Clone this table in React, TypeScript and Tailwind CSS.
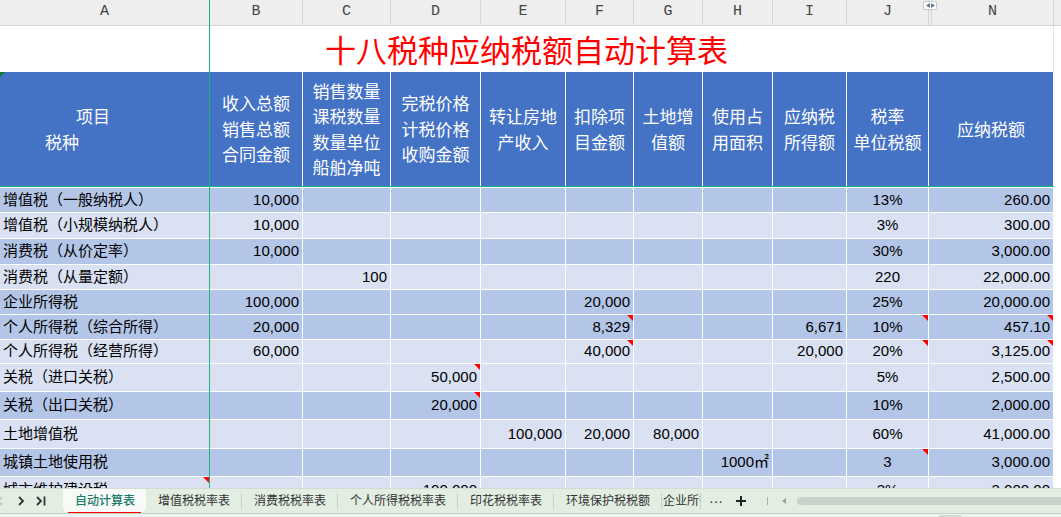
import React from "react";

const GRID =
  "grid grid-cols-[210px_93px_88px_90px_85px_68px_69px_70px_74px_82px_125px_1fr]";

type Row = {
  a: string;
  v: string[];
  h: string;
  dark: boolean;
  notes?: number[];
  aNote?: boolean;
};

// B C D E F G H I J N
const rows: Row[] = [
  { a: "增值税（一般纳税人）", v: ["10,000", "", "", "", "", "", "", "", "13%", "260.00"], h: "h-[25px]", dark: true },
  { a: "增值税（小规模纳税人）", v: ["10,000", "", "", "", "", "", "", "", "3%", "300.00"], h: "h-[26px]", dark: false },
  { a: "消费税（从价定率）", v: ["10,000", "", "", "", "", "", "", "", "30%", "3,000.00"], h: "h-[26px]", dark: true },
  { a: "消费税（从量定额）", v: ["", "100", "", "", "", "", "", "", "220", "22,000.00"], h: "h-[25px]", dark: false },
  { a: "企业所得税", v: ["100,000", "", "", "", "20,000", "", "", "", "25%", "20,000.00"], h: "h-[25px]", dark: true },
  { a: "个人所得税（综合所得）", v: ["20,000", "", "", "", "8,329", "", "", "6,671", "10%", "457.10"], h: "h-[25px]", dark: true, notes: [4, 8, 9] },
  { a: "个人所得税（经营所得）", v: ["60,000", "", "", "", "40,000", "", "", "20,000", "20%", "3,125.00"], h: "h-[24px]", dark: false, notes: [4, 8, 9] },
  { a: "关税（进口关税）", v: ["", "", "50,000", "", "", "", "", "", "5%", "2,500.00"], h: "h-[28px]", dark: false, notes: [2] },
  { a: "关税（出口关税）", v: ["", "", "20,000", "", "", "", "", "", "10%", "2,000.00"], h: "h-[28px]", dark: true, notes: [2] },
  { a: "土地增值税", v: ["", "", "", "100,000", "20,000", "80,000", "", "", "60%", "41,000.00"], h: "h-[29px]", dark: false },
  { a: "城镇土地使用税", v: ["", "", "", "", "", "", "1000㎡", "", "3", "3,000.00"], h: "h-[28px]", dark: true, notes: [8] },
  { a: "城市维护建设税", v: ["", "", "100,000", "", "", "", "", "", "3%", "3,000.00"], h: "h-[28px]", dark: false, aNote: true },
];

const headers: string[][] = [
  ["收入总额", "销售总额", "合同金额"],
  ["销售数量", "课税数量", "数量单位", "船舶净吨"],
  ["完税价格", "计税价格", "收购金额"],
  ["转让房地", "产收入"],
  ["扣除项", "目金额"],
  ["土地增", "值额"],
  ["使用占", "用面积"],
  ["应纳税", "所得额"],
  ["税率", "单位税额"],
  ["应纳税额"],
];

const tabs = ["增值税税率表", "消费税税率表", "个人所得税税率表", "印花税税率表", "环境保护税税额"];

function Note() {
  return (
    <svg className="absolute right-0 top-0" width="6" height="6" viewBox="0 0 6 6">
      <polygon points="0,0 6,0 6,6" fill="#ff0000" />
    </svg>
  );
}

function DataRow({ row }: { row: Row }) {
  const bg = row.dark ? "bg-[#b4c6e7]" : "bg-[#d9e1f2]";
  return (
    <div className={`${GRID} ${row.h}`}>
      <div className={`relative flex items-center border-b border-r border-white pl-[3px] ${bg}`}>
        {row.a}
        {row.aNote && <Note />}
      </div>
      {row.v.map((val, i) => (
        <div
          key={i}
          className={`relative flex items-center border-b border-r border-white px-[3px] ${bg} ${
            i === 8 ? "justify-center" : "justify-end"
          }`}
        >
          {val}
          {row.notes?.includes(i) && <Note />}
        </div>
      ))}
      <div className="bg-white" />
    </div>
  );
}

export default function App() {
  const letters = ["A", "B", "C", "D", "E", "F", "G", "H", "I", "J"];
  return (
    <div className="relative h-[517px] w-[1061px] overflow-hidden bg-white font-['Liberation_Sans','Noto_Sans_CJK_SC',sans-serif] text-black">
      {/* column letters */}
      <div className={`${GRID} h-[26px] border-b border-[#d6d6d6] bg-[#eeeeee] font-['Liberation_Mono',monospace] text-[15px] text-[#444]`}>
        {letters.map((l) => (
          <div key={l} className="flex items-center justify-center border-r border-[#d6d6d6]">
            {l}
          </div>
        ))}
        <div className="flex border-r border-[#d6d6d6]">
          <div className="ml-[2px] flex flex-1 items-center justify-center border-l border-[#d6d6d6]">N</div>
        </div>
        <div />
      </div>

      {/* title */}
      <div className="flex h-[46px]">
        <div className="flex w-[1054px] items-center justify-center border-r border-[#e4e4e4] font-['Noto_Sans_CJK_SC',sans-serif] text-[31px] text-[#ff0000]">
          十八税种应纳税额自动计算表
        </div>
      </div>

      {/* header band */}
      <div className={`${GRID} h-[114px] text-[17px] leading-[25.5px] text-white`}>
        <div className="relative flex flex-col justify-center border-r border-white bg-[#4472c4] pt-[3px]">
          <svg className="absolute left-0 top-0" width="5" height="5" viewBox="0 0 5 5">
            <polygon points="0,0 5,0 0,5" fill="#127a32" />
          </svg>
          <div className="pl-[76px]">项目</div>
          <div className="pl-[45px]">税种</div>
        </div>
        {headers.map((lines, i) => (
          <div key={i} className="flex flex-col items-center justify-center border-r border-white bg-[#4472c4] pt-[3px] text-center">
            {lines.map((t) => (
              <div key={t}>{t}</div>
            ))}
          </div>
        ))}
        <div className="bg-white" />
      </div>

      {/* frozen horizontal line */}
      <div className="h-[2px]">
        <div className="h-px w-[1054px] bg-[#1fb27a]" />
      </div>

      {/* data */}
      <div className="h-[300px] overflow-hidden text-[15px]">
        {rows.map((r) => (
          <DataRow key={r.a} row={r} />
        ))}
      </div>

      {/* sheet tabs */}
      <div className="h-[29px] border-t border-[#d3ddd3] bg-[#e2eee2] text-[12px] text-[#333]">
        <div className="flex h-[24px] items-center">
          <div className="flex w-[63px] items-center">
            <svg width="10" height="12" viewBox="0 0 10 12" className="-ml-[5px]">
              <path d="M7 2 L3 6 L7 10" stroke="#c2c8c2" strokeWidth="1.8" fill="none" />
            </svg>
            <svg width="10" height="12" viewBox="0 0 10 12" className="ml-[11px]">
              <path d="M3 2 L7 6 L3 10" stroke="#333" strokeWidth="1.8" fill="none" />
            </svg>
            <svg width="12" height="12" viewBox="0 0 12 12" className="ml-[9px]">
              <path d="M2 2 L6 6 L2 10" stroke="#333" strokeWidth="1.8" fill="none" />
              <path d="M9.5 1.5 L9.5 10.5" stroke="#333" strokeWidth="1.8" />
            </svg>
          </div>
          <div className="flex h-[24px] w-[637px] items-center overflow-hidden">
            <div className="relative flex h-full shrink-0 items-center rounded-b-[6px] bg-[#f7faf7] pl-3 pr-[11px] font-medium text-[#1b7b69]">
              自动计算表
              <div className="absolute bottom-[-1px] left-[5px] right-[5px] h-[2px] bg-[#ff0000]" />
            </div>
            {tabs.map((t) => (
              <React.Fragment key={t}>
                <div className="shrink-0 pl-3 pr-[11px]">{t}</div>
                <div className="h-[16px] w-px shrink-0 bg-[#c8d0c8]" />
              </React.Fragment>
            ))}
            <div className="shrink-0 pl-[1px]">企业所得税税率表</div>
          </div>
          <div className="h-[16px] w-px bg-[#c8d0c8]" />
          <div className="ml-[8px] text-[14px] leading-none text-[#333]">···</div>
          <svg width="12" height="12" viewBox="0 0 12 12" className="ml-[12px]">
            <path d="M6 1 V11 M1 6 H11" stroke="#222" strokeWidth="2" />
          </svg>
          <div className="ml-[20px] h-[8px] w-px bg-[#aab2aa]" />
          <svg width="6" height="8" viewBox="0 0 6 8" className="ml-[13px]">
            <polygon points="5,1 1,4 5,7" fill="#9aa29a" />
          </svg>
          <div className="ml-[10px] h-[8px] flex-1 rounded-l-full bg-[#c9d1c9]" />
        </div>
        <div className="relative h-[4px] border-t border-[#c6d0c6] bg-[#eef4ee]">
          <div className="absolute left-[938px] top-[1px] h-[3px] w-[24px] rounded-t-full bg-[#d0d6d0]" />
        </div>
      </div>

      {/* frozen vertical line */}
      <div className="absolute left-[209px] top-0 h-[488px] w-px bg-[#1fb27a]" />

      {/* column resize badge */}
      <div className="absolute left-[923px] top-[1px] flex h-[9px] w-[14px] items-center justify-center gap-[1px] rounded-[2px] border border-[#c8c8c8] bg-white">
        <svg width="4" height="5" viewBox="0 0 4 5">
          <polygon points="4,0 0,2.5 4,5" fill="#6b778a" />
        </svg>
        <svg width="4" height="5" viewBox="0 0 4 5">
          <polygon points="0,0 4,2.5 0,5" fill="#6b778a" />
        </svg>
      </div>
    </div>
  );
}
